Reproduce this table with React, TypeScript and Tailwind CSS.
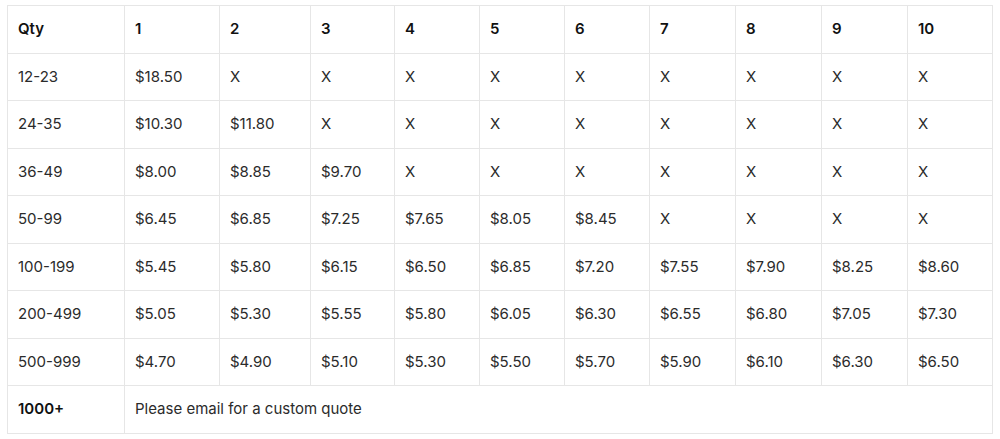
import React from "react";

const widths = [117, 95, 91, 84, 85, 85, 85, 86, 86, 86, 85];

const rows: [string, string[]][] = [
  ["12-23", ["$18.50", "X", "X", "X", "X", "X", "X", "X", "X", "X"]],
  ["24-35", ["$10.30", "$11.80", "X", "X", "X", "X", "X", "X", "X", "X"]],
  ["36-49", ["$8.00", "$8.85", "$9.70", "X", "X", "X", "X", "X", "X", "X"]],
  ["50-99", ["$6.45", "$6.85", "$7.25", "$7.65", "$8.05", "$8.45", "X", "X", "X", "X"]],
  ["100-199", ["$5.45", "$5.80", "$6.15", "$6.50", "$6.85", "$7.20", "$7.55", "$7.90", "$8.25", "$8.60"]],
  ["200-499", ["$5.05", "$5.30", "$5.55", "$5.80", "$6.05", "$6.30", "$6.55", "$6.80", "$7.05", "$7.30"]],
  ["500-999", ["$4.70", "$4.90", "$5.10", "$5.30", "$5.50", "$5.70", "$5.90", "$6.10", "$6.30", "$6.50"]],
];

const cell = "border border-[#e6e6e6] px-[10px] py-3 text-left align-middle leading-[22.5px]";

export default function App() {
  return (
    <div className="min-h-screen bg-white pl-[7px] pt-[5px] font-['Inter','Liberation_Sans',sans-serif] text-[15px] text-[#2b2b2b]">
      <table className="table-fixed border-collapse" style={{ width: 986 }}>
        <colgroup>
          {widths.map((w, i) => (
            <col key={i} style={{ width: w }} />
          ))}
        </colgroup>
        <thead>
          <tr>
            <th className={`${cell} font-semibold text-[#111]`}>Qty</th>
            {Array.from({ length: 10 }, (_, i) => (
              <th key={i} className={`${cell} font-semibold text-[#111]`}>
                {i + 1}
              </th>
            ))}
          </tr>
        </thead>
        <tbody>
          {rows.map(([qty, prices]) => (
            <tr key={qty}>
              <td className={cell}>{qty}</td>
              {prices.map((p, i) => (
                <td key={i} className={cell}>
                  {p}
                </td>
              ))}
            </tr>
          ))}
          <tr>
            <td className={`${cell} font-semibold text-[#111]`}>1000+</td>
            <td className={cell} colSpan={10}>
              Please email for a custom quote
            </td>
          </tr>
        </tbody>
      </table>
    </div>
  );
}
